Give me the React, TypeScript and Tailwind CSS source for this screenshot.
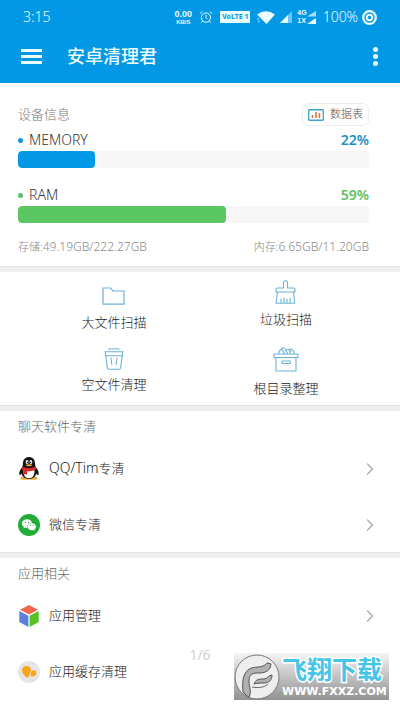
import type { ReactNode } from "react"
import { AlarmClock, ChevronRight } from "lucide-react"
import { AiFillWechat } from "react-icons/ai"

function StatusBar() {
  return (
    <div className="flex h-[34px] items-center justify-between pl-[23px] pr-[23px]">
      <span className="text-sm font-light">3:15</span>
      <div className="flex items-center">
        <div className="mr-[7px] w-[18px] text-center font-['Liberation_Sans',sans-serif] font-bold">
          <div className="text-[9px] leading-[10px]">0.00</div>
          <div className="text-[6px] leading-[7px]">KB/S</div>
        </div>
        <AlarmClock className="mr-[7px] h-3.5 w-3.5" strokeWidth={1.7} />
        <span className="mr-[7px] flex h-3 w-[30px] items-center justify-center whitespace-nowrap bg-[#e8fbff] text-[7px] font-bold text-[#0398e5]">
          VoLTE 1
        </span>
        <svg className="mr-[5px] h-[13px] w-[18px]" viewBox="0 0 18 13" fill="currentColor">
          <path d="M0 3.5Q9-3 18 3.5L9.5 13Z" />
          <path d="M0 8.5l2-1M1 11l2-1" stroke="currentColor" strokeWidth="0.8" />
        </svg>
        <svg className="mr-[5px] h-3 w-3" viewBox="0 0 12 12" fill="currentColor">
          <path d="M12 0v12H0z" opacity="0.45" />
          <path d="M8 4v8H0z" />
        </svg>
        <div className="font-['Liberation_Sans',sans-serif] text-[7px] font-bold leading-[8px]">
          <div>4G</div>
          <div>1X</div>
        </div>
        <svg className="mr-[7px] h-[13px] w-[9px]" viewBox="0 0 9 13" fill="currentColor">
          <path d="M9 0v5.5H0z" opacity="0.7" />
          <path d="M9 7v6H0z" />
        </svg>
        <span className="mr-1 text-sm font-light">100%</span>
        <svg className="h-[15px] w-[15px]" viewBox="0 0 15 15" fill="none" stroke="currentColor">
          <circle cx="7.5" cy="7.5" r="6.3" strokeWidth="2.3" />
          <circle cx="7.5" cy="7.5" r="2.8" strokeWidth="2" />
        </svg>
      </div>
    </div>
  )
}

function Header() {
  return (
    <header className="bg-[#0398e5] pb-[5px] text-[#eafcff]">
      <StatusBar />
      <div className="flex h-11 items-center pl-[21px] pr-[22px]">
        <button aria-label="菜单" className="mr-[25px] flex flex-col gap-[3px]">
          <span className="h-[3px] w-[21px] bg-current" />
          <span className="h-[3px] w-[21px] bg-current" />
          <span className="h-[3px] w-[21px] bg-current" />
        </button>
        <h1 className="text-lg font-medium">安卓清理君</h1>
        <button aria-label="更多" className="ml-auto flex flex-col gap-0.5">
          <span className="h-[5px] w-[5px] rounded-full bg-current" />
          <span className="h-[5px] w-[5px] rounded-full bg-current" />
          <span className="h-[5px] w-[5px] rounded-full bg-current" />
        </button>
      </div>
    </header>
  )
}

type MeterProps = {
  name: string
  percent: number
  dot: string
  fill: string
  valueColor: string
  barWidth: number
}

function Meter({ name, percent, dot, fill, valueColor, barWidth }: MeterProps) {
  return (
    <div>
      <div className="flex h-[22px] items-center">
        <span className={`mr-1.5 h-[5px] w-[5px] rounded-full ${dot}`} />
        <span className="text-sm font-light text-[#333]">{name}</span>
        <span className={`ml-auto text-sm font-semibold ${valueColor}`}>{percent}%</span>
      </div>
      <div className="h-[17px] overflow-hidden rounded bg-[#f6f6f6]">
        <div className={`h-full rounded ${fill}`} style={{ width: `${barWidth}%` }} />
      </div>
    </div>
  )
}

function Usage({ label, value }: { label: string; value: string }) {
  return (
    <span className="text-[11px]">
      {label}:<span className="text-xs">{value}</span>
    </span>
  )
}

function DeviceInfo() {
  return (
    <section className="pb-[11px] pl-[18px] pr-[31px] pt-5">
      <div className="mb-[3px] flex h-[23px] items-center justify-between">
        <h2 className="text-[13px] font-light text-[#777]">设备信息</h2>
        <button className="flex h-[23px] items-center gap-1.5 rounded-md border border-[#eee] px-[5px] text-[11px] font-light text-[#555]">
          <svg className="h-3 w-4" viewBox="0 0 16 12" fill="none">
            <rect x="0.75" y="0.75" width="14.5" height="10.5" rx="0.5" stroke="#3ba3cf" strokeWidth="1.3" />
            <path d="M4.5 9V6M8 9V3M11.5 9V4" stroke="#e0763a" strokeWidth="1.6" />
          </svg>
          数据表
        </button>
      </div>
      <Meter name="MEMORY" percent={22} barWidth={22} dot="bg-[#1d93d0]" fill="bg-[#0398e5]" valueColor="text-[#2290c0]" />
      <div className="mt-4">
        <Meter name="RAM" percent={59} barWidth={59.4} dot="bg-[#5cbf6c]" fill="bg-[#5ac763]" valueColor="text-[#5bc062]" />
      </div>
      <div className="mt-4 flex h-4 items-center justify-between font-light text-[#888]">
        <Usage label="存储" value="49.19GB/222.27GB" />
        <Usage label="内存" value="6.65GB/11.20GB" />
      </div>
    </section>
  )
}

function Tool({ label, className, children }: { label: string; className: string; children: ReactNode }) {
  return (
    <button className={`flex flex-col items-center text-[13px] font-light leading-5 text-[#222] ${className}`}>
      {children}
      {label}
    </button>
  )
}

function Tools() {
  return (
    <section className="grid h-[133px] grid-cols-2 px-7">
      <div className="flex flex-col items-center pt-[15px]">
        <Tool label="大文件扫描" className="gap-[7px]">
          <svg className="h-[18px] w-[23px]" viewBox="0 0 23 18" fill="none" stroke="#69b3d8" strokeWidth="1.2">
            <path d="M1 1h7.5l2.5 3h11v13.2H1z" />
          </svg>
        </Tool>
        <Tool label="空文件清理" className="mt-4 gap-1">
          <svg className="h-[22px] w-5" viewBox="0 0 20 22" fill="none" stroke="#69b3d8" strokeWidth="1.1" strokeLinecap="round" strokeLinejoin="round">
            <path d="M5 1.8Q5 .8 6 .8h8q1 0 1 1M.8 3.8h18.4M1.3 7.8h17.4M1.3 4l2 15.5q.2 1.7 2 1.7h9.4q1.8 0 2-1.7l2-15.5M7 10l.8 6.5M13 10l-.8 6.5" />
          </svg>
        </Tool>
      </div>
      <div className="flex flex-col items-center pt-2">
        <Tool label="垃圾扫描" className="gap-[5px]">
          <svg className="h-6 w-[21px]" viewBox="0 0 21 24" fill="none" stroke="#69b3d8" strokeWidth="1.1" strokeLinejoin="round" strokeLinecap="round">
            <path d="M8.5 8V2.3q0-1.5 2-1.5t2 1.5V8h6q1.5 0 1.5 1.5V12H1V9.5Q1 8 2.5 8zM2.5 12L1 23.2h18.7L18.5 12M6 23v-4M9 23v-5M12 23v-4M15 23v-5" />
          </svg>
        </Tool>
        <Tool label="根目录整理" className="mt-[17px] gap-1.5">
          <svg className="h-[26px] w-[26px]" viewBox="0 0 26 26" fill="none" stroke="#69b3d8" strokeWidth="1.1" strokeLinejoin="round">
            <path d="M1 8h24v3.5H1zM3 11.5V25h20V11.5M9 15h8v2.5H9z" />
            <path d="M5.5 8l1.5-4q1.5-1 2.5.5L12 8M8.5 3.5Q9 1.5 11 2q1.5.3 1.5 2L15 8M13 5.5Q13 3.3 15 3.5q1.5.3 2 2M16 4q2-1.8 3.5.2Q21.5 5 21 8M17 7.5q-.5-2 1.5-2" />
          </svg>
        </Tool>
      </div>
    </section>
  )
}

function PenguinIcon() {
  return (
    <svg className="h-[23px] w-[22px]" viewBox="0 0 22 23">
      <ellipse cx="7" cy="21.2" rx="4.7" ry="1.6" fill="#e9a932" />
      <ellipse cx="15" cy="21.2" rx="4.7" ry="1.6" fill="#e9a932" />
      <path d="M11 0C7 0 4.8 3 4.9 7.2L4.4 10C2.2 12.3.8 15 1.4 17.8c.2.8 1.2.3 2-1.2C4.4 20 7.2 22 11 22s6.6-2 7.6-5.4c.8 1.5 1.8 2 2 1.2.6-2.8-.8-5.5-3-7.8l-.5-2.8C17.2 3 15 0 11 0Z" fill="#101318" />
      <path d="M5.8 12.5Q11 15 16.2 12.5c1 4.5-.7 8.7-5.2 8.7S4.8 17 5.8 12.5Z" fill="#fff" />
      <ellipse cx="9.1" cy="5" rx="1.4" ry="2" fill="#fff" />
      <ellipse cx="12.9" cy="5" rx="1.4" ry="2" fill="#fff" />
      <circle cx="9.5" cy="5.3" r=".7" fill="#111" />
      <circle cx="12.6" cy="5.3" r=".7" fill="#111" />
      <ellipse cx="11" cy="8.3" rx="3.2" ry="1" fill="#eda62c" />
      <path d="M4.6 9.8Q11 12.6 17.4 9.8l.8 2.8Q13.7 14.8 9 14.2v3.4l-3.5-.4.2-3.5-1.8-1z" fill="#e0252b" />
    </svg>
  )
}

function CubeIcon() {
  return (
    <svg className="h-[22px] w-5" viewBox="0 0 20 22">
      <path d="M10 0l9 4.8L10 9.6 1 4.8z" fill="#f2664a" />
      <path d="M.3 6l9.100 4.800V22L.3 17z" fill="#5b7fdb" />
      <path d="M19.700 6l-9.100 4.800V22l9.100-5z" fill="#55c122" />
    </svg>
  )
}

function CacheIcon() {
  return (
    <svg className="h-[22px] w-[22px]" viewBox="0 0 22 22">
      <circle cx="11" cy="11" r="11" fill="#e5e5e5" />
      <path d="M8.5 5c3 0 4.5 2 4.5 4.5 0 3-1.5 5.3-3.7 7.5C7 15 4 12.5 4 9.2 4 6.7 6 5 8.5 5Z" fill="#f9a51a" />
      <path d="M15.5 9c2 0 3.2 1.3 3.2 3 0 2.4-2.4 4-5.5 4.200-.8-2-1-3.300-.6-4.800.4-1.400 1.500-2.400 2.900-2.400Z" fill="#f9a51a" stroke="#e5e5e5" strokeWidth="0.7" />
    </svg>
  )
}

function Row({ icon, label, arrow = true }: { icon: ReactNode; label: ReactNode; arrow?: boolean }) {
  return (
    <li>
      <button className="flex h-14 w-full items-center pl-[18px] pr-5 pt-px text-left text-[13px] font-light text-[#222]">
        <span className="mr-[9px] flex w-[22px] justify-center">{icon}</span>
        <span>{label}</span>
        {arrow && <ChevronRight className="ml-auto h-5 w-5 text-[#aaa]" strokeWidth={1.5} />}
      </button>
    </li>
  )
}

function ListSection({ title, children }: { title: string; children: ReactNode }) {
  return (
    <section>
      <h2 className="flex h-[29px] items-center pl-[18px] pt-[3px] text-[13px] font-light text-[#666]">{title}</h2>
      <ul>{children}</ul>
    </section>
  )
}

function Divider() {
  return <div className="h-1.5 border-t border-[#e4e4e4] bg-[#eee]" />
}

function Watermark() {
  return (
    <div className="absolute bottom-3 right-[11px] flex h-[47px] w-[155px] items-center bg-linear-to-b from-[#f5f5f5] to-[#929292]">
      <svg className="h-[46px] w-[46px] shrink-0" viewBox="0 0 46 46" fill="none">
        <circle cx="23" cy="23" r="22" fill="#eee" stroke="#777" />
        <path d="M9 38C8 28 9 20 14 16c5-4 10-2 15-4 3-1 3-3 5-3l3 1-1 4c-3 5-8 5-13 5-6 0-8 3-8 8 0 6 3 10 0 16-2-1-3-2-3-2z" fill="#b0b0b0" stroke="#555" />
        <path d="M20 30c2-5 5-5 10-5 4 0 4-4 8-4 0 5-3 8-8 8-4 0-6 0-10 1z" fill="#b0b0b0" stroke="#555" />
        <path d="M18 33c5 1 12 1 16-3" stroke="#666" />
      </svg>
      <div className="ml-0.5 whitespace-nowrap">
        <div className="font-['Liberation_Sans','Noto_Sans_CJK_SC',sans-serif] text-[25px] font-bold leading-[30px] text-[#45c4ea] [-webkit-text-stroke:3px_#fff] [paint-order:stroke_fill]">
          飞翔下载
        </div>
        <div className="font-['DejaVu_Sans',sans-serif] text-[11px] font-bold leading-[14px] text-white">WWW.FXXZ.COM</div>
      </div>
    </div>
  )
}

export default function App() {
  return (
    <div className="relative min-h-screen bg-white pb-[13px] font-['Noto_Sans','Noto_Sans_CJK_SC',sans-serif]">
      <Header />
      <main>
        <DeviceInfo />
        <Divider />
        <Tools />
        <Divider />
        <ListSection title="聊天软件专清">
          <Row
            icon={<PenguinIcon />}
            label={
              <>
                <span className="text-sm">QQ/Tim</span>专清
              </>
            }
          />
          <Row
            icon={
              <span className="flex h-[22px] w-[22px] items-center justify-center rounded-full bg-[#22ac38]">
                <AiFillWechat className="h-4 w-4 text-white" />
              </span>
            }
            label="微信专清"
          />
        </ListSection>
        <Divider />
        <ListSection title="应用相关">
          <Row icon={<CubeIcon />} label="应用管理" />
          <Row icon={<CacheIcon />} label="应用缓存清理" arrow={false} />
        </ListSection>
      </main>
      <div className="absolute inset-x-0 bottom-[47px] text-center text-sm leading-5 text-[#d0d0d0]">1/6</div>
      <Watermark />
    </div>
  )
}
